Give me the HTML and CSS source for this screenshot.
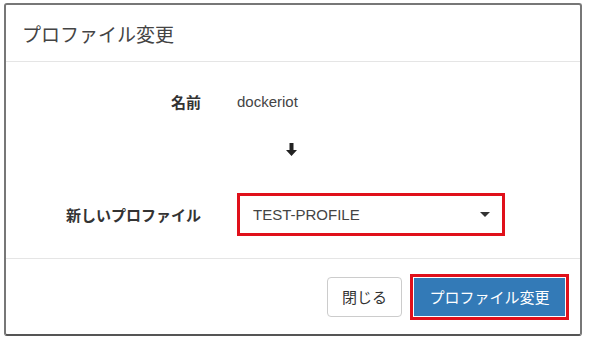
FILE: index.html
```html
<!DOCTYPE html>
<html>
<head>
    <title>プロファイル変更</title>
    <link rel="stylesheet" href="styles.css">
</head>
<body>
    <div class="modal">
        <div class="modal-header">
            <h4>プロファイル変更</h4>
        </div>
        <div class="modal-body">
            <div class="form-row">
                <label>名前</label>
                <span class="value">dockeriot</span>
            </div>
            <div class="arrow-row">
                <svg width="11" height="13" viewBox="0 0 11 13"><path d="M3.5 0h4v7h3.5l-5.5 6l-5.5-6h3.5z" fill="#222"/></svg>
            </div>
            <div class="form-row select-row">
                <label>新しいプロファイル</label>
                <div class="select-box mark">
                    <span>TEST-PROFILE</span>
                    <span class="caret"></span>
                </div>
            </div>
        </div>
        <div class="modal-footer">
            <button class="btn">閉じる</button>
            <div class="mark btn-mark">
                <button class="btn btn-primary">プロファイル変更</button>
            </div>
        </div>
    </div>
</body>
</html>
```

FILE: styles.css
```css
body {
    margin: 0;
    background: #fff;
    font-family: "Liberation Sans", Arial, "Noto Sans CJK JP", sans-serif;
    color: #333;
}
.modal {
    margin: 3px 4px 0 4px;
    width: 578px;
    height: 333px;
    border: 2px solid #777;
    border-bottom-color: #555;
    border-radius: 3px;
    box-sizing: border-box;
    display: flex;
    flex-direction: column;
}
.modal-header {
    height: 56px;
    padding: 0 16px;
    border-bottom: 1px solid #e5e5e5;
    display: flex;
    align-items: center;
}
.modal-header h4 {
    margin: 0;
    font-size: 19px;
    font-weight: normal;
    color: #444;
}
.modal-body {
    height: 197px;
    border-bottom: 1px solid #e5e5e5;
    padding-top: 24px;
    box-sizing: border-box;
}
.form-row {
    display: flex;
    align-items: center;
    height: 30px;
}
.form-row label {
    width: 195px;
    text-align: right;
    font-weight: bold;
    font-size: 15px;
    color: #333;
}
.form-row .value {
    margin-left: 36px;
    font-size: 15px;
    color: #444;
}
.arrow-row {
    height: 76px;
    box-sizing: border-box;
    padding: 26px 0 0 280px;
}
.select-row {
    height: 44px;
}
.mark {
    border: 3px solid #e0101a;
    box-sizing: border-box;
}
.select-box {
    margin-left: 36px;
    width: 268px;
    height: 43px;
    display: flex;
    align-items: center;
    justify-content: space-between;
    padding: 0 12px 0 13px;
    font-size: 15px;
    color: #444;
}
.caret {
    width: 0;
    height: 0;
    border-left: 5px solid transparent;
    border-right: 5px solid transparent;
    border-top: 5px solid #333;
}
.modal-footer {
    flex: 1;
    display: flex;
    align-items: center;
    justify-content: flex-end;
    padding-right: 11px;
    gap: 8px;
}
.btn {
    font-family: inherit;
    font-size: 15px;
    height: 40px;
    padding: 0 14px;
    border: 1px solid #ccc;
    border-radius: 4px;
    background: #fff;
    color: #333;
}
.btn-mark {
    padding: 1px;
}
.btn-primary {
    display: block;
    height: 38px;
    width: 151px;
    border: none;
    border-radius: 0;
    background: #337ab7;
    color: #fff;
}
```
